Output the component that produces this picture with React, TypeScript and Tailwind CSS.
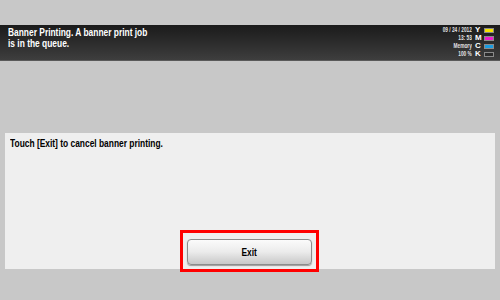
import React from 'react';

const inks = [
  { letter: 'Y', color: 'bg-[#f5e400]' },
  { letter: 'M', color: 'bg-[#ec1ecb]' },
  { letter: 'C', color: 'bg-[#1a9be0]' },
  { letter: 'K', color: 'bg-[#2c2c2c]' },
];

const status = ['09 / 24 / 2012', '13: 53', 'Memory', '100 %'];

const App = () => {
  return (
    <div
      className="w-[500px] h-[300px] bg-[#c8c8c8] flex flex-col overflow-hidden"
      style={{ fontFamily: '"Liberation Sans", Arial, sans-serif' }}
    >
      <div className="h-[25px]" />

      {/* Status bar */}
      <div className="h-[36px] bg-gradient-to-b from-[#1b1b1b] to-[#3e3e3e] border-b border-[#5a5a5a] flex justify-between pl-[8px] pr-[6px]">
        <div className="text-white font-bold text-[10px] leading-[11px] pt-[2px]">
          <div className="origin-left scale-x-[0.84] whitespace-nowrap">Banner Printing. A banner print job</div>
          <div className="origin-left scale-x-[0.84] whitespace-nowrap">is in the queue.</div>
        </div>
        <div className="flex pt-[1px]">
          <div className="text-right text-[#e4e4e4] font-bold text-[7px] leading-[8px] mr-[3px]">
            {status.map((s) => (
              <div key={s} className="h-[8px] origin-right scale-x-[0.68] whitespace-nowrap">{s}</div>
            ))}
          </div>
          <div className="flex flex-col">
            {inks.map((ink) => (
              <div key={ink.letter} className="flex items-center h-[8px]">
                <span className="text-white font-bold text-[8px] leading-[8px] w-[9px] text-left">{ink.letter}</span>
                <span className={`w-[10px] h-[5px] border border-[#8a8a8a] ${ink.color}`} />
              </div>
            ))}
          </div>
        </div>
      </div>

      <div className="h-[72px]" />

      {/* Message panel */}
      <div className="mx-[5px] h-[136px] bg-[#efefef] flex flex-col">
        <div className="px-[5px] pt-[5px] text-black font-bold text-[10px] leading-[11px]">
          <div className="origin-left scale-x-[0.84] whitespace-nowrap">Touch [Exit] to cancel banner printing.</div>
        </div>
        <div className="flex-1" />
        <div className="flex justify-center">
          <div className="border-[3px] border-[#ff0000] w-[139px] h-[42px] -mb-[3px] ml-[-1px] flex items-start justify-center pt-[6px]">
            <button className="w-[125px] h-[26px] rounded-[4px] border border-[#8c8c8c] bg-gradient-to-b from-[#fbfbfb] via-[#ebebeb] to-[#c8c8c8] shadow-[0_1px_1px_rgba(0,0,0,0.35)] text-black font-bold text-[10px]">
              <span className="inline-block scale-x-[0.84]">Exit</span>
            </button>
          </div>
        </div>
      </div>
    </div>
  );
};

export default App;
